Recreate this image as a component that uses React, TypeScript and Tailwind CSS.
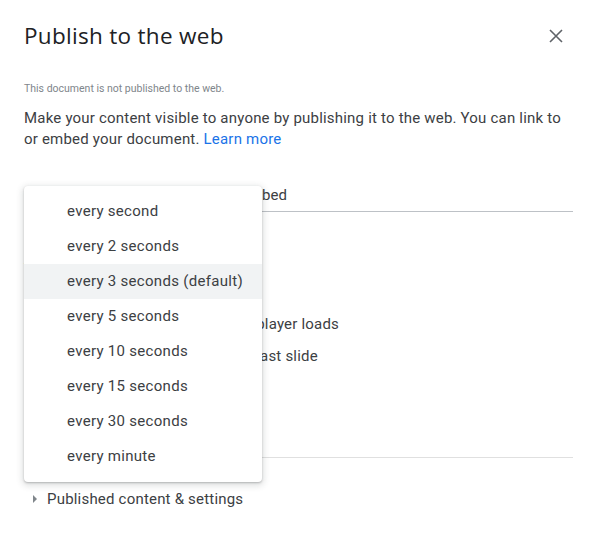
import React from "react";

const items = [
  "every second",
  "every 2 seconds",
  "every 3 seconds (default)",
  "every 5 seconds",
  "every 10 seconds",
  "every 15 seconds",
  "every 30 seconds",
  "every minute",
];

export default function App() {
  return (
    <div
      className="relative w-[592px] h-[535px] bg-white overflow-hidden"
      style={{ fontFamily: "Roboto, 'Liberation Sans', sans-serif" }}
    >
      <div className="pl-6 pr-[19px] pt-[21px]">
        <div className="flex items-start justify-between">
          <h1 className="text-[22.5px] leading-[30px] text-[#202124] font-normal tracking-[0.3px]" style={{ fontFamily: "'Open Sans', Roboto, sans-serif" }}>
            Publish to the web
          </h1>
          <button className="mt-[7px] mr-[9px] w-[16px] h-[16px] flex items-center justify-center text-[#5f6368]">
            <svg width="16" height="16" viewBox="0 0 16 16">
              <path d="M2 2 L14 14 M14 2 L2 14" stroke="#5f6368" strokeWidth="1.6" fill="none" />
            </svg>
          </button>
        </div>
        <p className="mt-[30px] text-[10.5px] leading-[16px] text-[#80868b]">
          This document is not published to the web.
        </p>
        <p className="mt-[11px] text-[15px] leading-[21px] text-[#3c4043] tracking-[0.2px]">
          Make your content visible to anyone by publishing it to the web. You can link to or embed your document.{" "}
          <span className="text-[#1a73e8]">Learn more</span>
        </p>
        <div className="mt-[34px] flex border-b border-[#bdc1c6] text-[15px] text-[#3c4043] tracking-[0.1px]">
          <div className="w-[216px] pb-[3px] border-b-2 border-[#1a73e8] -mb-px text-center">Link</div>
          <div className="pb-[4px]">Embed</div>
        </div>
        <div className="h-[245px] text-[15px] text-[#3c4043] tracking-[0.2px] pt-[30px]">
          <div className="flex items-center gap-3 h-[36px]">
            <span>Auto-advance slides:</span>
          </div>
          <div className="mt-[31px] flex items-center h-[32px]">
            <span className="w-[18px] h-[18px] border-2 border-[#5f6368] rounded-sm" />
            <span>Start slideshow as soon as the player loads</span>
          </div>
          <div className="flex items-center h-[32px]">
            <span className="w-[18px] h-[18px] border-2 border-[#5f6368] rounded-sm" />
            <span>Restart the slideshow after the last slide</span>
          </div>
        </div>
        <div className="border-t border-[#e0e0e0]" />
        <div className="mt-[30px] flex items-center text-[15px] text-[#3c4043] tracking-[0.2px]">
          <svg width="6" height="8" viewBox="0 0 6 8" className="ml-[8px] mr-[9px]">
            <path d="M1 0 L5 4 L1 8 Z" fill="#80868b" />
          </svg>
          <span>Published content &amp; settings</span>
        </div>
      </div>

      <div className="absolute left-6 top-[186px] w-[238px] bg-white rounded-[4px] py-[8px] shadow-[0_2px_6px_2px_rgba(60,64,67,0.15),0_1px_2px_0_rgba(60,64,67,0.3)]">
        {items.map((t, i) => (
          <div
            key={t}
            className={`h-[35px] flex items-center pl-[43px] text-[15px] text-[#3c4043] tracking-[0.3px] ${i === 2 ? "bg-[#f1f3f4]" : ""}`}
          >
            {t}
          </div>
        ))}
      </div>
    </div>
  );
}
